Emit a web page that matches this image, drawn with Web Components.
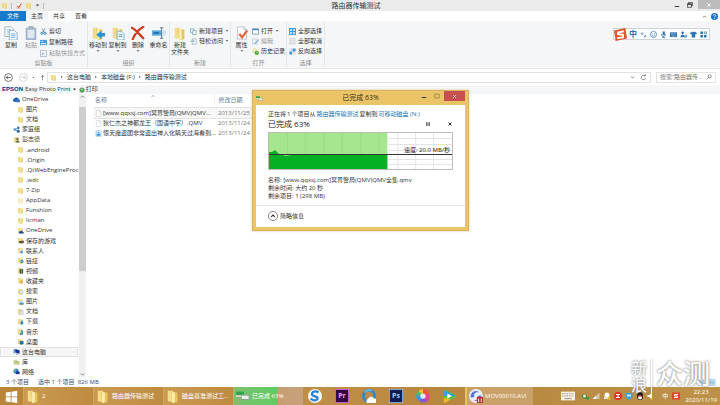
<!DOCTYPE html>
<html lang="zh-CN">
<head>
<meta charset="utf-8">
<title>路由器传输测试</title>
<style>
html,body{margin:0;height:100%}
body{font:6px/10px "Open Sans","Noto Sans CJK SC",sans-serif;color:#333;background:#fff;overflow:hidden}
</style>
</head>
<body>
<explorer-desktop></explorer-desktop>
<script>
const folder = '<path d="M2 2h6l2 13-8-1z" fill="#f2dc8a"/><path d="M6 3l7 1v11l-6 1z" fill="#e6c65c"/><path d="M7 3l3 1v11l-3 1z" fill="#fbeeb4"/>';
const page = '<path d="M3 1h7l3 3v11H3z" fill="#fff" stroke="#b8bcc2"/><path d="M10 1v3h3" fill="none" stroke="#b8bcc2"/>';
const ICONS = {
  folder,
  page,
  foldercloud: folder + '<path d="M5 15a3 3 0 0 1 1-5 4 4 0 0 1 7 1 2 2 0 0 1 1 4z" fill="#1c4fa0"/>',
  foldergame: folder + '<path d="M5 9h10v5H5z" fill="#444"/><circle cx="13" cy="11" r="3" fill="#8a5a4a"/>',
  foldercontact: folder + '<path d="M6 7h8v8H6z" fill="#cfe0f2"/><path d="M8 9h5v5H8z" fill="#5a8cc8"/>',
  folderlink: folder + '<circle cx="11" cy="10" r="4" fill="#2e8ba8"/><path d="M7 10h6" stroke="#fff"/>',
  foldervideo: folder + '<path d="M6 5h8v10H6z" fill="#3d474a"/><path d="M9 6h3v8H9z" fill="#68a05a"/>',
  folderstar: folder + '<path d="M10 6l1 3h4l-3 2 1 4-3-2-3 2 1-4-3-2h4z" fill="#f0a020"/>',
  foldersearch: folder + '<circle cx="10" cy="9" r="4" fill="#eaf4fc" stroke="#8aa8bc"/>',
  folderpic: folder + '<path d="M5 7h10v8H5z" fill="#b9dcf5"/><path d="M5 15l4-5 3 3 3-2v4z" fill="#2c7280"/>',
  folderdoc: folder + '<path d="M6 5h8v10H6z" fill="#f7f7f7" stroke="#9aa5b0"/><path d="M8 8h4M8 11h4" stroke="#7a8da0"/>',
  folderdown: folder + '<path d="M9 6h4v4h3l-5 6-5-6h3z" fill="#2b87c8"/>',
  foldermusic: folder + '<path d="M9 5l5 1v7a2 2 0 1 1-2-2V8l-2 0v6a2 2 0 1 1-2-2z" fill="#2787c4"/>',
  folderdesk: folder + '<path d="M6 7h9v7H6z" fill="#2478a8"/><path d="M7 14h7" stroke="#234"/>',
  cloud: '<path d="M1 12a4 4 0 0 1 2-6 5 5 0 0 1 9 0 4 4 0 0 1 2 7H2z" fill="#1c55a8"/><path d="M6 14a3 3 0 0 1 1-5 4 4 0 0 1 7 1 2 2 0 0 1 1 4z" fill="#3b78c6"/>',
  home: '<circle cx="4" cy="8" r="3" fill="#49a3d8"/><circle cx="12" cy="4" r="3" fill="#3a78a8"/><circle cx="12" cy="12" r="3.5" fill="#225f90"/><path d="M4 8l8-4v8z" fill="none" stroke="#4a8ab8" stroke-width="2"/>',
  user: folder + '<circle cx="10" cy="7" r="3" fill="#8c6f4e"/><path d="M6 15v-3l4-2 5 2v3z" fill="#607a54"/>',
  pc: '<path d="M1 3h4v9H1z" fill="#7d9bbd"/><path d="M5 2l10 3v8L5 10z" fill="#1633a0"/><path d="M7 12l6 2-1 1H6z" fill="#7890a8"/>',
  lib: '<path d="M1 4h7l2 2h5v8H1z" fill="#d9dea0"/><path d="M3 7h10v5H3z" fill="#a8c48c"/><path d="M1 13h14v2H1z" fill="#d9c368"/>',
  net: '<circle cx="7" cy="7" r="6" fill="#2c86c4"/><path d="M3 4l4-2 1 4-4 3z" fill="#7bc47a"/><path d="M7 8h8v6H7z" fill="#152f9a"/>',
  media: '<path d="M2 1h9l3 3v11H2z" fill="#cfe6f8" stroke="#8ebce0"/><path d="M4 9h8v4H4z" fill="#2f8fd8"/><circle cx="8" cy="6" r="2" fill="#4ba3e3"/>',
  copy: '<path d="M1 1h7l3 3v8H1z" fill="#f8fbfe" stroke="#9bb0c4"/><path d="M3 4h5M3 6h5M3 8h4" stroke="#9cc5e4"/><path d="M6 5h6l3 3v8H6z" fill="#f8fbfe" stroke="#8da6bc"/><path d="M8 9h5M8 11h5M8 13h5" stroke="#68a9dc"/>',
  paste: '<path d="M2 2h12v14H2z" fill="#9db2cb"/><path d="M4 4h8v10H4z" fill="#dfe9f5"/><path d="M5 0h6v4H5z" fill="#a8b3c0"/>',
  cut: '<path d="M5 1l5 9M11 1l-5 9" stroke="#517b9c" stroke-width="1.6"/><circle cx="4.500" cy="12" r="2.500" fill="none" stroke="#2a7ab8" stroke-width="2"/><circle cx="11.500" cy="12" r="2.500" fill="none" stroke="#2a7ab8" stroke-width="2"/>',
  path: '<path d="M0 2h16v12H0z" fill="#4a9ad8"/><path d="M2 5h5v2H2zM2 9h12v3H2z" fill="#d6ecfb"/>',
  shortcut: '<path d="M1 1h14v14H1z" fill="#f4f7fa" stroke="#8ea0b4" stroke-width="1.500"/><path d="M5 11V6l6 3z" fill="#7c92aa"/>',
  moveto: folder + '<path d="M16 8v4h-4v3l-6-5 6-5v3z" fill="#2b94d8"/>',
  copyto: folder + '<path d="M7 6h5l3 3v7H7z" fill="#eef6fd" stroke="#7ba9d0"/><path d="M9 10h4M9 12h4" stroke="#4d99d6"/>',
  del: '<path d="M1 2c3 1 9 8 13 12M14 1C9 4 4 10 2 15" stroke="#d03a1c" stroke-width="2.600" fill="none" stroke-linecap="round"/>',
  rename: '<path d="M0 5h11v6H0z" fill="#5ba7da"/><path d="M2 7h6v2H2z" fill="#2271ac"/><path d="M11 5h5v6h-5z" fill="#cfe2f2"/><path d="M9 2h4M11 2v12M9 14h4" stroke="#596d80" stroke-width="1"/>',
  newitem: '<path d="M1 2h8v9H1z" fill="#eaf5fd" stroke="#5a9dcc" stroke-width="1.500"/><path d="M6 6h8v9H6z" fill="#fff" stroke="#6f8fa8" stroke-width="1.500"/>',
  access: '<path d="M5 2h9v12H5z" fill="#fff" stroke="#8ba2b8" stroke-width="1.500"/><path d="M1 6h6V3l4 4-4 4V9H1z" fill="#a0b9cf"/>',
  props: page + '<path d="M5 9l3 4 6-8" fill="none" stroke="#e2663a" stroke-width="2.600"/>',
  open: '<path d="M1 2h14v12H1z" fill="#fff" stroke="#517fa8" stroke-width="1.600"/><path d="M1 2h14v3H1z" fill="#3f7eb4"/>',
  edit: '<path d="M1 2h11v12H1z" fill="#eef2f6" stroke="#a5b6c6"/><path d="M14 3l2 2-8 8-3 1 1-3z" fill="#8fb4d4"/>',
  history: '<circle cx="6" cy="6" r="5" fill="#e8d070"/><circle cx="6" cy="6" r="3" fill="#eef4dc"/><circle cx="11" cy="11" r="5" fill="#53a052"/><path d="M11 8v3h3" stroke="#fff" fill="none"/>',
  selall: '<path d="M0 0h16v16H0z" fill="#3b97dc"/><path d="M2 2h5v5H2zM9 2h5v5H9zM2 9h5v5H2zM9 9h5v5H9z" fill="#b9defa"/>',
  selnone: '<path d="M1 1h5v5H1zM9 1h5v5H9zM1 9h5v5H1zM9 9h5v5H9z" fill="#f5f5f5" stroke="#c3c8cd" stroke-width="1.500"/>',
  selinv: '<path d="M8 1h7v7H8zM1 8h6v7H1z" fill="#3b97dc"/><path d="M2 2h4v4H2zM9 10h5v5H9z" fill="#fff" stroke="#b3c2cf"/>',
  back: '<circle cx="8" cy="8" r="7" fill="none" stroke="#555" stroke-width="1.400"/><path d="M12 8H4M7 5L4 8l3 3" fill="none" stroke="#555" stroke-width="1.600"/>',
  fwd: '<circle cx="8" cy="8" r="7" fill="none" stroke="#ccc" stroke-width="1.400"/><path d="M4 8h8M9 5l3 3-3 3" fill="none" stroke="#ccc" stroke-width="1.600"/>',
  up: '<path d="M8 14V3M4 7l4-4 4 4" fill="none" stroke="#666" stroke-width="1.600"/>',
  refresh: '<path d="M11 4a5 5 0 1 0 2 5M8 4h4V0" fill="none" stroke="#666" stroke-width="1.600"/>',
  search: '<circle cx="10" cy="6" r="4" fill="none" stroke="#555" stroke-width="1.600"/><path d="M7 9l-5 5" stroke="#555" stroke-width="2"/>',
  down: '<path d="M3 5l5 5 5-5" fill="none" stroke="#555" stroke-width="2.200"/>',
  upc: '<path d="M3 11l5-5 5 5" fill="none" stroke="#555" stroke-width="2.200"/>',
  tri: '<path d="M3 5h10l-5 6z" fill="#444"/>',
  right: '<path d="M5 3l6 5-6 5z" fill="#555"/>',
  help: '<circle cx="8" cy="8" r="8" fill="#1c74c8"/><path d="M5.500 6a2.500 2.500 0 1 1 3 2.500V10M8.500 11.500v2" fill="none" stroke="#fff" stroke-width="1.800"/>',
  print: '<circle cx="8" cy="8" r="7" fill="#6b9a6c"/><circle cx="8" cy="8" r="4" fill="#3fae49"/><path d="M5 6h6" stroke="#d8f0d8" stroke-width="2"/>',
  min: '<path d="M2 12h12" stroke="#333" stroke-width="2.600"/>',
  max: '<path d="M2 3h12v10H2z" fill="none" stroke="#7d6a3a" stroke-width="1.500"/>',
  restore: '<path d="M4 5V1h11v9h-3" fill="none" stroke="#333" stroke-width="2"/><path d="M1 5h11v9H1z" fill="none" stroke="#333" stroke-width="2"/><path d="M1 6h11" stroke="#333" stroke-width="3"/>',
  close: '<path d="M4 4l8 8M12 4l-8 8" stroke="currentColor" stroke-width="2.600"/>',
  pause: '<path d="M5 3v10M11 3v10" stroke="#333" stroke-width="3"/>',
  circup: '<circle cx="8" cy="8" r="7.300" fill="#fff" stroke="#444" stroke-width="1"/><path d="M5 9.500l3-3 3 3" fill="none" stroke="#333" stroke-width="1.800"/>',
  xfer: '<path d="M0 3h9v4H0z" fill="#28a84a"/><path d="M6 7h9v5H6z" fill="#e8eee8" stroke="#8a9a8a"/><path d="M0 7h6v2H0z" fill="#d8d8d0"/>',
  win: '<path d="M1 3l6-1v6H1zM8 2l7-1v7H8zM1 9h6v6l-6-1zM8 9h7v7l-7-1z" fill="#fff"/>',
  sogou: '<circle cx="8" cy="8" r="8" fill="#f3f7fb"/><path d="M12 4C8 1 3 4 5 7c2 2 6 1 6 4-1 3-6 2-8 0" fill="none" stroke="#2d82cc" stroke-width="2.600"/>',
  pr: '<path d="M0 0h16v16H0z" fill="#d66be0"/><path d="M1 1h14v14H1z" fill="#33083c"/>',
  ps: '<path d="M0 0h16v16H0z" fill="#8fb4e8"/><path d="M1 1h14v14H1z" fill="#101c52"/>',
  browser: '<circle cx="8" cy="8" r="6.500" fill="none" stroke="#2f86c8" stroke-width="3"/><path d="M3 4a7 7 0 0 1 8-2" stroke="#6bc0e8" stroke-width="2" fill="none"/><path d="M6 16a3 3 0 0 1 1-5 4 4 0 0 1 7 0 2.500 2.500 0 0 1 1 5z" fill="#fff"/>',
  swirl: '<path d="M8 8V0a8 8 0 0 1 7 5z" fill="#f0543c"/><path d="M8 8l7-3a8 8 0 0 1-2 9z" fill="#e84098"/><path d="M8 8l5 6a8 8 0 0 1-9 0z" fill="#8a52dc"/><path d="M8 8l-4 6a8 8 0 0 1-4-7z" fill="#2f9ce8"/><path d="M8 8L0 7a8 8 0 0 1 3-5z" fill="#44c070"/><path d="M8 8L3 2a8 8 0 0 1 5-2z" fill="#f4c42c"/><circle cx="8" cy="8" r="3" fill="#f4e6f0"/>',
  play: '<path d="M1 1q0-1 2 0l12 6q1 1 0 2L3 15q-2 1-2-1z" fill="#58c048"/><path d="M1 1l14 7H1z" fill="#2f9fe0"/><path d="M1 10l8 2-7 4q-1 0-1-1z" fill="#f3b62c"/><path d="M5 5l5 3-5 3z" fill="#fff"/>',
  swift: '<circle cx="8" cy="8" r="8" fill="#eaf0fb"/><path d="M2 10C1 4 7 0 12 4 8 3 5 5 6 9zM14 7c1 5-4 8-8 6 3 0 5-2 4-5z" fill="#5a78d8"/><path d="M9 9h7v7H9z" fill="#b83030"/><path d="M11 11v4M14 11v4" stroke="#fff"/>',
  kbd: '<path d="M0 3h16v10H0z" fill="#f7f3ea"/><path d="M1 5.500h14M1 8h14" stroke="#9a7b48" stroke-width="1.200" stroke-dasharray="1 1"/><path d="M4 11h8" stroke="#9a7b48"/>',
  nv: '<path d="M0 8q5-6 12-2v7q-8 2-12-5z" fill="#4b8435"/><circle cx="7" cy="8" r="3" fill="#e6eedc"/><path d="M11 10h5v5h-5z" fill="#30a040"/>',
  signal: '<path d="M15 1v13H1z" fill="#cfc3ac"/><path d="M8 8v6H1z" fill="#fff"/>',
  qq: '<circle cx="8" cy="6" r="5" fill="#fff"/><path d="M2 9h8v5H2z" fill="#e9e9e9"/><path d="M12 8l4 7H8z" fill="#edbf28"/>',
  red: '<circle cx="8" cy="8" r="8" fill="#dc3426"/><path d="M4 5h8M8 5v6M4 11h8" stroke="#fff" stroke-width="2"/>',
  shield: '<path d="M1 2h14v8l-7 6-7-6z" fill="#3a9fdf"/><path d="M4 5h8v4H4z" fill="#c8ecff"/>',
  penguin: '<ellipse cx="8" cy="8" rx="6" ry="8" fill="#111"/><ellipse cx="8" cy="11" rx="4" ry="4" fill="#fff"/><path d="M3 8h10" stroke="#c22" stroke-width="2"/>',
  sound: '<path d="M1 6h4l5-5v14l-5-5H1z" fill="#fff"/>',
  sg: '<path d="M0 1h16v14H0z" fill="#e2442a"/><path d="M12 5H5v3h6v3H4" fill="none" stroke="#fff" stroke-width="2"/>',
  sbig: '<path d="M0 3L14 0l2 13-14 3z" fill="#e0552c"/><path d="M12 4L5 5.500v2l6 1v3L4 12.500" fill="none" stroke="#fff" stroke-width="2.400"/>',
  smile: '<circle cx="8" cy="8" r="7" fill="none" stroke="#2a73b4" stroke-width="1.600"/><path d="M5 5v2M11 5v2M4 9q4 5 8 0" fill="none" stroke="#2a73b4" stroke-width="1.500"/>',
  dots: '<circle cx="5" cy="6" r="2" fill="none" stroke="#2a73b4" stroke-width="1.500"/><path d="M12 9v2l-2 3" stroke="#2a73b4" stroke-width="2.400" fill="none"/>',
  mic: '<path d="M6 1h5v8H6z" fill="#2a73b4"/><path d="M3 7q0 5 5 5t5-5M8 12v4M5 15h7" fill="none" stroke="#2a73b4" stroke-width="1.800"/>',
  keyb: '<path d="M0 3h16v11H0z" fill="#2a73b4"/><path d="M2 6h12M2 9h12M4 12h8" stroke="#fff" stroke-dasharray="2 1"/>',
  person: '<circle cx="6" cy="4" r="3" fill="#2a73b4"/><path d="M1 14q0-6 5-6t5 6z" fill="#2a73b4"/><path d="M10 9h6v6h-6z" fill="#6da4d0"/>',
  shirt: '<path d="M5 1l3 2 3-2 5 4-2 3-2-1v8H4V7L2 8 0 5z" fill="#2a73b4"/>',
  grid: '<path d="M1 1h6v6H1zM1 9h6v6H1zM9 9h6v6H9z" fill="#2a73b4"/><path d="M10 2h5v4h-5z" fill="none" stroke="#2a73b4" stroke-width="1.500"/>',
  views: '<path d="M0 1h14v14H0z" fill="#d5ebfa" stroke="#68abd5"/><path d="M2 5h10M2 8h10M2 11h10" stroke="#408cb8"/>'
};

function define(name, html, init) {
  customElements.define(name, class extends HTMLElement {
    connectedCallback() {
      if (this.shadowRoot) return;
      const root = this.attachShadow({mode: 'open'});
      const t = document.createElement('template');
      t.innerHTML = '<style>*{box-sizing:border-box}button,input{font:inherit;color:inherit;border:0;padding:0;margin:0;background:none;text-align:inherit}a{color:inherit;text-decoration:none}</style>' +
        (typeof html === 'function' ? html(this) : html);
      root.append(t.content.cloneNode(true));
      if (init) init(this, root);
    }
  });
}
const ic = (n, s = 8) => `<ui-icon name="${n}" size="${s}"></ui-icon>`;

define('ui-icon', el => {
  const s = el.getAttribute('size') || 8, n = el.getAttribute('name');
  return `<style>:host{display:inline-flex;flex:none;width:${s}px;height:${s}px}svg{width:100%;height:100%}</style><svg viewBox="0 0 16 16" aria-hidden="true">${ICONS[n]}</svg>`;
});

define('title-bar', `<style>
:host{display:grid;grid-template-columns:1fr auto 1fr;background:#ebebeb;height:11px;align-items:center}
.q{display:flex;align-items:center;gap:3px;padding-left:1px}.q i{width:1px;height:6px;background:#bbb}
h1{margin:0 8px 0 0;font:7px/11px "Open Sans","Noto Sans CJK SC",sans-serif;color:#333}
.w{display:flex;justify-content:flex-end;align-items:center;height:9px;align-self:start;gap:7px}
.w button{display:flex;align-items:center;justify-content:center;height:9px}
.x{width:22px;background:#bcbcbc;color:#fff;margin-left:-2px}
</style><div class="q">${ic('folder',7)}<i></i>${ic('props',7)}${ic('folder',7)}${ic('tri',5)}<i></i></div>
<h1>路由器传输测试</h1>
<div class="w"><button aria-label="最小化">${ic('min',6)}</button><button aria-label="还原">${ic('restore',6)}</button><button class="x" aria-label="关闭">${ic('close',6)}</button></div>`);

define('ribbon-tabs', `<style>
:host{display:flex;height:10px;background:#fff;align-items:stretch}
button{width:22px;text-align:center;line-height:11px}
.f{width:26px;background:#1979ca;color:#fff}.a{background:#f5f6f7}
.r{margin-left:auto;display:flex;align-items:center;gap:4px;padding-right:2px}
</style><button class="f">文件</button><button class="a">主页</button><button>共享</button><button>查看</button><div class="r">${ic('upc',5)}${ic('help',7)}</div>`);

define('ribbon-big', el => `<style>
:host{display:block;flex:none}button{display:flex;flex-direction:column;align-items:center;width:100%;line-height:7px;white-space:nowrap;gap:2px}
:host([dim]){color:#999}ui-icon.d{margin-top:-2px}span{text-align:center}
</style><button>${ic(el.getAttribute('icon'),14)}<span><slot></slot></span>${el.hasAttribute('drop') ? '<ui-icon class="d" name="tri" size="4"></ui-icon>' : ''}</button>`);

define('ribbon-small', el => `<style>
:host{display:block}button{display:flex;align-items:center;gap:2px;line-height:10px;white-space:nowrap}
:host([dim]){color:#999}
</style><button>${ic(el.getAttribute('icon'),7)}<span><slot></slot></span>${el.hasAttribute('drop') ? ic('tri',4) : ''}</button>`);

define('ribbon-group', el => `<style>
:host{display:flex;flex-direction:column;flex:none;border-right:1px solid #e4e6e8;height:45px}
.b{display:flex;flex:1;min-height:0;padding-top:4px}
.l{text-align:center;color:#8c8c8c;line-height:8px;height:8px}
</style><div class="b"><slot></slot></div><div class="l">${el.getAttribute('label')}</div>`);

define('ribbon-bar', `<style>
:host{display:flex;background:#f5f6f7;height:48px;border-bottom:1px solid #e6e8ea;padding-top:1px}
.s{display:flex;flex-direction:column;padding-top:0}.s.g{gap:1px}
ribbon-big{width:19px}
</style>
<ribbon-group label="剪贴板" style="width:88px"><ribbon-big icon="copy" style="width:22px">复制</ribbon-big><ribbon-big icon="paste" dim style="width:18px">粘贴</ribbon-big>
<div class="s g"><ribbon-small icon="cut">剪切</ribbon-small><ribbon-small icon="path">复制路径</ribbon-small><ribbon-small icon="shortcut" dim>粘贴快捷方式</ribbon-small></div></ribbon-group>
<ribbon-group label="组织" style="width:82px;"><ribbon-big icon="moveto" drop style="width:20px">移动到</ribbon-big><ribbon-big icon="copyto" drop>复制到</ribbon-big><ribbon-big icon="del" drop style="width:22px">删除</ribbon-big><ribbon-big icon="rename">重命名</ribbon-big></ribbon-group>
<ribbon-group label="新建" style="width:61px"><ribbon-big icon="folder" style="width:20px">新建<br>文件夹</ribbon-big><div class="s"><ribbon-small icon="newitem" drop>新建项目</ribbon-small><ribbon-small icon="access" drop>轻松访问</ribbon-small></div></ribbon-group>
<ribbon-group label="打开" style="width:56px"><ribbon-big icon="props" drop style="width:21px">属性</ribbon-big><div class="s"><ribbon-small icon="open" drop>打开</ribbon-small><ribbon-small icon="edit" dim>编辑</ribbon-small><ribbon-small icon="history">历史记录</ribbon-small></div></ribbon-group>
<ribbon-group label="选择" style="width:38px"><div class="s" style="padding-left:2px"><ribbon-small icon="selall">全部选择</ribbon-small><ribbon-small icon="selnone">全部取消</ribbon-small><ribbon-small icon="selinv">反向选择</ribbon-small></div></ribbon-group>`);

define('address-bar', `<style>
:host{display:flex;align-items:center;height:16px;padding:0 4px;gap:5px}
button{display:flex}.n{display:flex;align-items:center;gap:4px}
.p{flex:1;display:flex;align-items:center;gap:3px;border:1px solid #e3e3e3;height:11px;padding:0 3px 0 2px;margin-left:-4px}
.p .e{margin-left:auto;display:flex;gap:5px;align-items:center}
form{display:flex;align-items:center;border:1px solid #e3e3e3;width:60px;height:11px;padding:0 3px;margin:0}
input{flex:1;min-width:0;height:9px;color:#777;outline:0}
</style><div class="n"><button aria-label="后退">${ic('back',9)}</button><button aria-label="前进" style="margin-left:2px">${ic('fwd',9)}</button>${ic('tri',3)}<button aria-label="上移">${ic('up',7)}</button></div>
<div class="p">${ic('folder',7)}${ic('right',4)}<a href="#">这台电脑</a>${ic('right',4)}<a href="#">本地磁盘 (F:)</a>${ic('right',4)}<a href="#">路由器传输测试</a><span class="e">${ic('down',5)}<button aria-label="刷新">${ic('refresh',7)}</button></span></div>
<form><input aria-label="搜索" value="搜索“路由器传...">${ic('search',6)}</form>`);

define('print-bar', `<style>
:host{display:flex;align-items:center;gap:2px;height:9px;background:#f5f6f7;padding-left:2px;line-height:9px}
b{font:bold 6px/9px "Liberation Sans",sans-serif;color:#10307c}button{display:flex;align-items:center;gap:1px}
</style><b>EPSON</b><button>Easy Photo Print ${ic('tri',5)}</button><button>${ic('print',6)}打印</button>`);

const TREE = [['cloud','OneDrive',1],['folder','图片'],['folder','文档'],['home','家庭组',1],['user','彭志德',1],['folder','.android'],['folder','.Origin'],['folder','.QtWebEngineProc'],['folder','.wdc'],['folder','7-Zip'],['folder','AppData',0,'f'],['folder','Funshion'],['folder','licman'],['foldercloud','OneDrive'],['foldergame','保存的游戏'],['foldercontact','联系人'],['folderlink','链接'],['foldervideo','视频'],['folderstar','收藏夹'],['foldersearch','搜索'],['folderpic','图片'],['folderdoc','文档'],['folderdown','下载'],['foldermusic','音乐'],['folderdesk','桌面'],['pc','这台电脑',1,'s'],['lib','库',1],['net','网络',1]];
define('folder-tree', `<style>
:host{display:flex;width:86px;flex:none;min-height:0}
ul{flex:1;min-width:0;margin:0;padding:0;list-style:none;display:grid;grid-auto-rows:1fr;overflow:hidden}
li{display:flex;align-items:center;gap:2px;padding-left:17px;white-space:nowrap;overflow:hidden}
li.t{padding-left:13px}li.s{background:#f6f6f6;border:1px solid #e3e3e3;padding-left:12px;margin-right:1px}li.f ui-icon{opacity:.5}
.b{width:7px;background:#f0f0f0;display:flex;flex-direction:column;align-items:center}
.b i{width:7px;flex:0 0 58%;background:#cdcdcd;margin:8px 0 auto}
</style><ul>${TREE.map(r => `<li class="${r[2] ? 't ' : ''}${r[3] || ''}">${ic(r[0],7)}<a href="#">${r[1]}</a></li>`).join('')}</ul><div class="b">${ic('upc',5)}<i></i>${ic('down',5)}</div>`);

define('file-list', `<style>
:host{display:block;flex:1;min-width:0;padding:0 0 0 8px}
table{border-collapse:collapse;table-layout:fixed;width:200px}
th{font-weight:400;text-align:left;color:#6a7f9c;padding:0 0 0 1px;height:11px;vertical-align:middle;border-right:1px solid #eee;position:relative}
th+th,td+td{padding-left:4px}th ui-icon{position:absolute;left:57px;top:0}
td{padding:0 0 0 1px;height:10px;white-space:nowrap;color:#777}
td:first-child{color:#333}td div{display:flex;align-items:center;gap:1px}
tbody:before{content:"";display:block;height:3px}
tr.s td{background:#f7f7f7;box-shadow:0 1px #e2e2e2,0 -1px #e2e2e2}
</style><table><colgroup><col style="width:120px"><col></colgroup><thead><tr><th>名称${ic('upc',4)}</th><th>修改日期</th></tr></thead><tbody>
<tr class="s"><td><div>${ic('page',7)}<span>[www.qqxsj.com]冥界警局(QMV)QMV...</span></div></td><td>2013/11/25</td></tr>
<tr><td><div>${ic('page',7)}<span>狄仁杰之神都龙王（国语中字）.QMV</span></div></td><td>2013/11/24</td></tr>
<tr><td><div>${ic('media',7)}<span>惊天魔盗团非常盗出神入化瞒天过海看到...</span></div></td><td>2013/11/24</td></tr></tbody></table>`);

define('status-bar', `<style>:host{display:flex;align-items:center;gap:9px;height:10px;padding:0 4px 0 6px;color:#3b4c6b}i{margin-left:auto;display:flex;gap:4px}</style>
<span>3 个项目</span><span>选中 1 个项目&nbsp; 826 MB</span><i>${ic('views',7)}${ic('views',7)}</i>`);

define('speed-chart', `<style>
:host{display:block;position:relative;height:38px;border:1px solid #bbb;background:#fff}
svg{display:block;width:100%;height:100%}
span{position:absolute;right:2px;top:12px;line-height:10px;color:#222}
</style><svg viewBox="0 0 184 36" preserveAspectRatio="none"><path d="M0 0h119v36H0z" fill="#a5e68f"/>
<path d="M18.500 0v36M36.500 0v36M55.500 0v36M73.500 0v36M92.500 0v36M110.500 0v36" stroke="#9adb86"/>
<path d="M129.500 0v36M147.500 0v36M165.500 0v36M119 5.500h65M119 11.500h65M119 17.500h65M119 26.500h65M119 31.500h65" stroke="#e4e4e4" fill="none"/>
<path d="M0 19l3 0 3-2 4 4 7 2 6-1 6-1h10l8 1h10l12-1 12 1h14l14 0h10v14H0z" fill="#06b025"/><path d="M0 21.500h184" stroke="#333"/></svg><span>速度: 20.0 MB/秒</span>`);

define('copy-dialog', `<style>
:host{display:flex;flex-direction:column;background:#ebc467;border:1px solid #d9b562;padding:0 3px 3px;box-shadow:0 0 2px #d9c08a}
header{display:grid;grid-template-columns:1fr auto 1fr;height:14px;align-items:center}
h2{margin:0;font-weight:400;font-size:7px;line-height:14px;color:#3b3115}
.w{display:flex;justify-content:flex-end;align-items:center;gap:7px;align-self:start}.w button{display:flex;align-items:center;justify-content:center;height:10px}
.w .x{background:#c75050;color:#fff;width:21px;margin-left:-3px}
main{background:#fff;padding:5px 12px 0}
.l{display:flex;gap:1px;line-height:8px;white-space:nowrap;color:#333}.l a{color:#2276b4}
.t{display:flex;align-items:center;font-size:8px;line-height:12px;color:#222;margin-bottom:2px}
.t div{margin-left:auto;display:flex;gap:16px}.t button{display:flex;color:#222}
p{margin:6px 0 5px;line-height:8px}
footer{background:#fff;border-top:1px solid #e6e6e6;padding:5px 12px 6px}
footer button{display:flex;align-items:center;gap:2px;line-height:10px}
</style><header>${ic('xfer',7)}<h2>已完成 63%</h2><div class="w"><button aria-label="最小化">${ic('min',6)}</button><button aria-label="最大化">${ic('max',6)}</button><button class="x" aria-label="关闭">${ic('close',5)}</button></div></header>
<main><div class="l"><span>正在将</span> <span>1</span> <span>个项目从</span> <a href="#">路由器传输测试</a> <span>复制到</span> <a href="#">可移动磁盘 (N:)</a></div>
<div class="t">已完成 63%<div><button aria-label="暂停">${ic('pause',6)}</button><button aria-label="取消">${ic('close',6)}</button></div></div>
<speed-chart></speed-chart><p>名称: [www.qqxsj.com]冥界警局(QMV)QMV全集.qmv<br>剩余时间: 大约 20 秒<br>剩余项目: 1 (298 MB)</p></main>
<footer><button>${ic('circup',10)}简略信息</button></footer>`);

define('ime-bar', `<style>
:host{display:flex;align-items:center;gap:3px;height:12px;background:#fff;border:1px solid #ccd5dc;padding:0 2px 0 0}
b{font-size:8px;line-height:10px;color:#2a73b4;margin-left:-1px}ui-icon:first-child{margin:-1px 0 -1px -1px}
</style>${ic('sbig',13)}<b>中</b>${['dots','smile','mic','keyb','person','shirt','grid'].map(n => ic(n,7)).join('')}`);

define('task-item', `<style>
:host{display:block;width:70px;flex:none;border-left:1px solid #d0a563;background:linear-gradient(90deg,#cb9a52,#be8c40)}
:host([kind=busy]){background:linear-gradient(90deg,#7cc070,#5fcc62 64%,#c79e72 64%,#c8a27c)}
:host([kind=media]){background:#c9a169;border-left:2px solid #e6c65c;width:68px}
button{display:flex;align-items:center;gap:2px;width:100%;height:100%;padding:0 2px;color:#fff;white-space:nowrap;overflow:hidden}
</style><button><slot name="icon"></slot><span><slot></slot></span></button>`);

define('task-bar', `<style>
:host{display:flex;height:18px;flex:none;background:linear-gradient(90deg,#b98538,#bf8f48 45%,#b8863f 60%,#bd9248);color:#fff}
.s{width:23px;display:flex;align-items:center;justify-content:center;flex:none}
.l{display:flex;gap:13px;align-items:center;padding:0 8px 0 5px;flex:none}.l button{display:flex;width:14px;height:14px;position:relative}
.l b{position:absolute;inset:0;font:bold 7px/13px "Open Sans",sans-serif;text-align:center;color:#e9a4f0}.l b.p{color:#a9d0ff}
.r{margin-left:auto;display:flex;align-items:center;gap:3px}.k{display:flex;padding-right:3px}.c{padding:0 1px 0 4px}
time{line-height:8px;text-align:center;padding:0 3px 0 2px}
</style><button class="s" aria-label="开始">${ic('win',13)}</button>
<task-item><ui-icon slot="icon" name="folder" size="14"></ui-icon>2</task-item>
<task-item><ui-icon slot="icon" name="folder" size="14"></ui-icon>路由器传输测试</task-item>
<task-item><ui-icon slot="icon" name="folder" size="14"></ui-icon>磁盘基准测试工...</task-item>
<task-item kind="busy"><ui-icon slot="icon" name="xfer" size="14"></ui-icon>已完成 63%</task-item>
<div class="l"><button aria-label="搜狗">${ic('sogou',14)}</button><button>${ic('pr',14)}<b>Pr</b></button><button aria-label="浏览器">${ic('browser',14)}</button><button>${ic('ps',14)}<b class="p">Ps</b></button><button aria-label="相册">${ic('swirl',14)}</button><button aria-label="播放器">${ic('play',14)}</button></div>
<task-item kind="media"><ui-icon slot="icon" name="swift" size="14"></ui-icon>MOV00010.AVI</task-item>
<div class="r"><span class="k">${ic('kbd',14)}</span>${['nv','signal','qq','red','shield','penguin','sound'].map(n => ic(n,8)).join('')}<span class="c">中</span>${ic('sg',8)}<time>22:23<br>2020/11/19</time></div>`);

define('brand-mark', `<style>
:host{display:flex;align-items:flex-start;gap:4px;color:#fff;font-family:"Noto Sans CJK SC",sans-serif;text-shadow:0 0 2px #888,0 0 3px #aaa;pointer-events:none}
.a{font-size:16px;line-height:17px;width:16px}.b{font-size:27px;line-height:27px;white-space:nowrap;font-weight:500}i{width:1px;height:34px;background:#fff;box-shadow:0 0 2px #888}
</style><span class="a">新<br>浪</span><i></i><span class="b">众测</span>`);

define('explorer-desktop', `<style>
:host{display:flex;flex-direction:column;min-height:100vh;height:100%;position:relative}
.m{flex:1;display:flex;min-height:0}
copy-dialog{position:absolute;left:252px;top:90px;width:217px}
ime-bar{position:absolute;right:10px;top:28px}
brand-mark{position:absolute;right:10px;bottom:12px}
</style><title-bar></title-bar><ribbon-tabs></ribbon-tabs><ribbon-bar></ribbon-bar><address-bar></address-bar><print-bar></print-bar>
<div class="m"><folder-tree></folder-tree><file-list></file-list></div><status-bar></status-bar><task-bar></task-bar>
<ime-bar></ime-bar><copy-dialog></copy-dialog><brand-mark></brand-mark>`);
</script>
</body>
</html>
